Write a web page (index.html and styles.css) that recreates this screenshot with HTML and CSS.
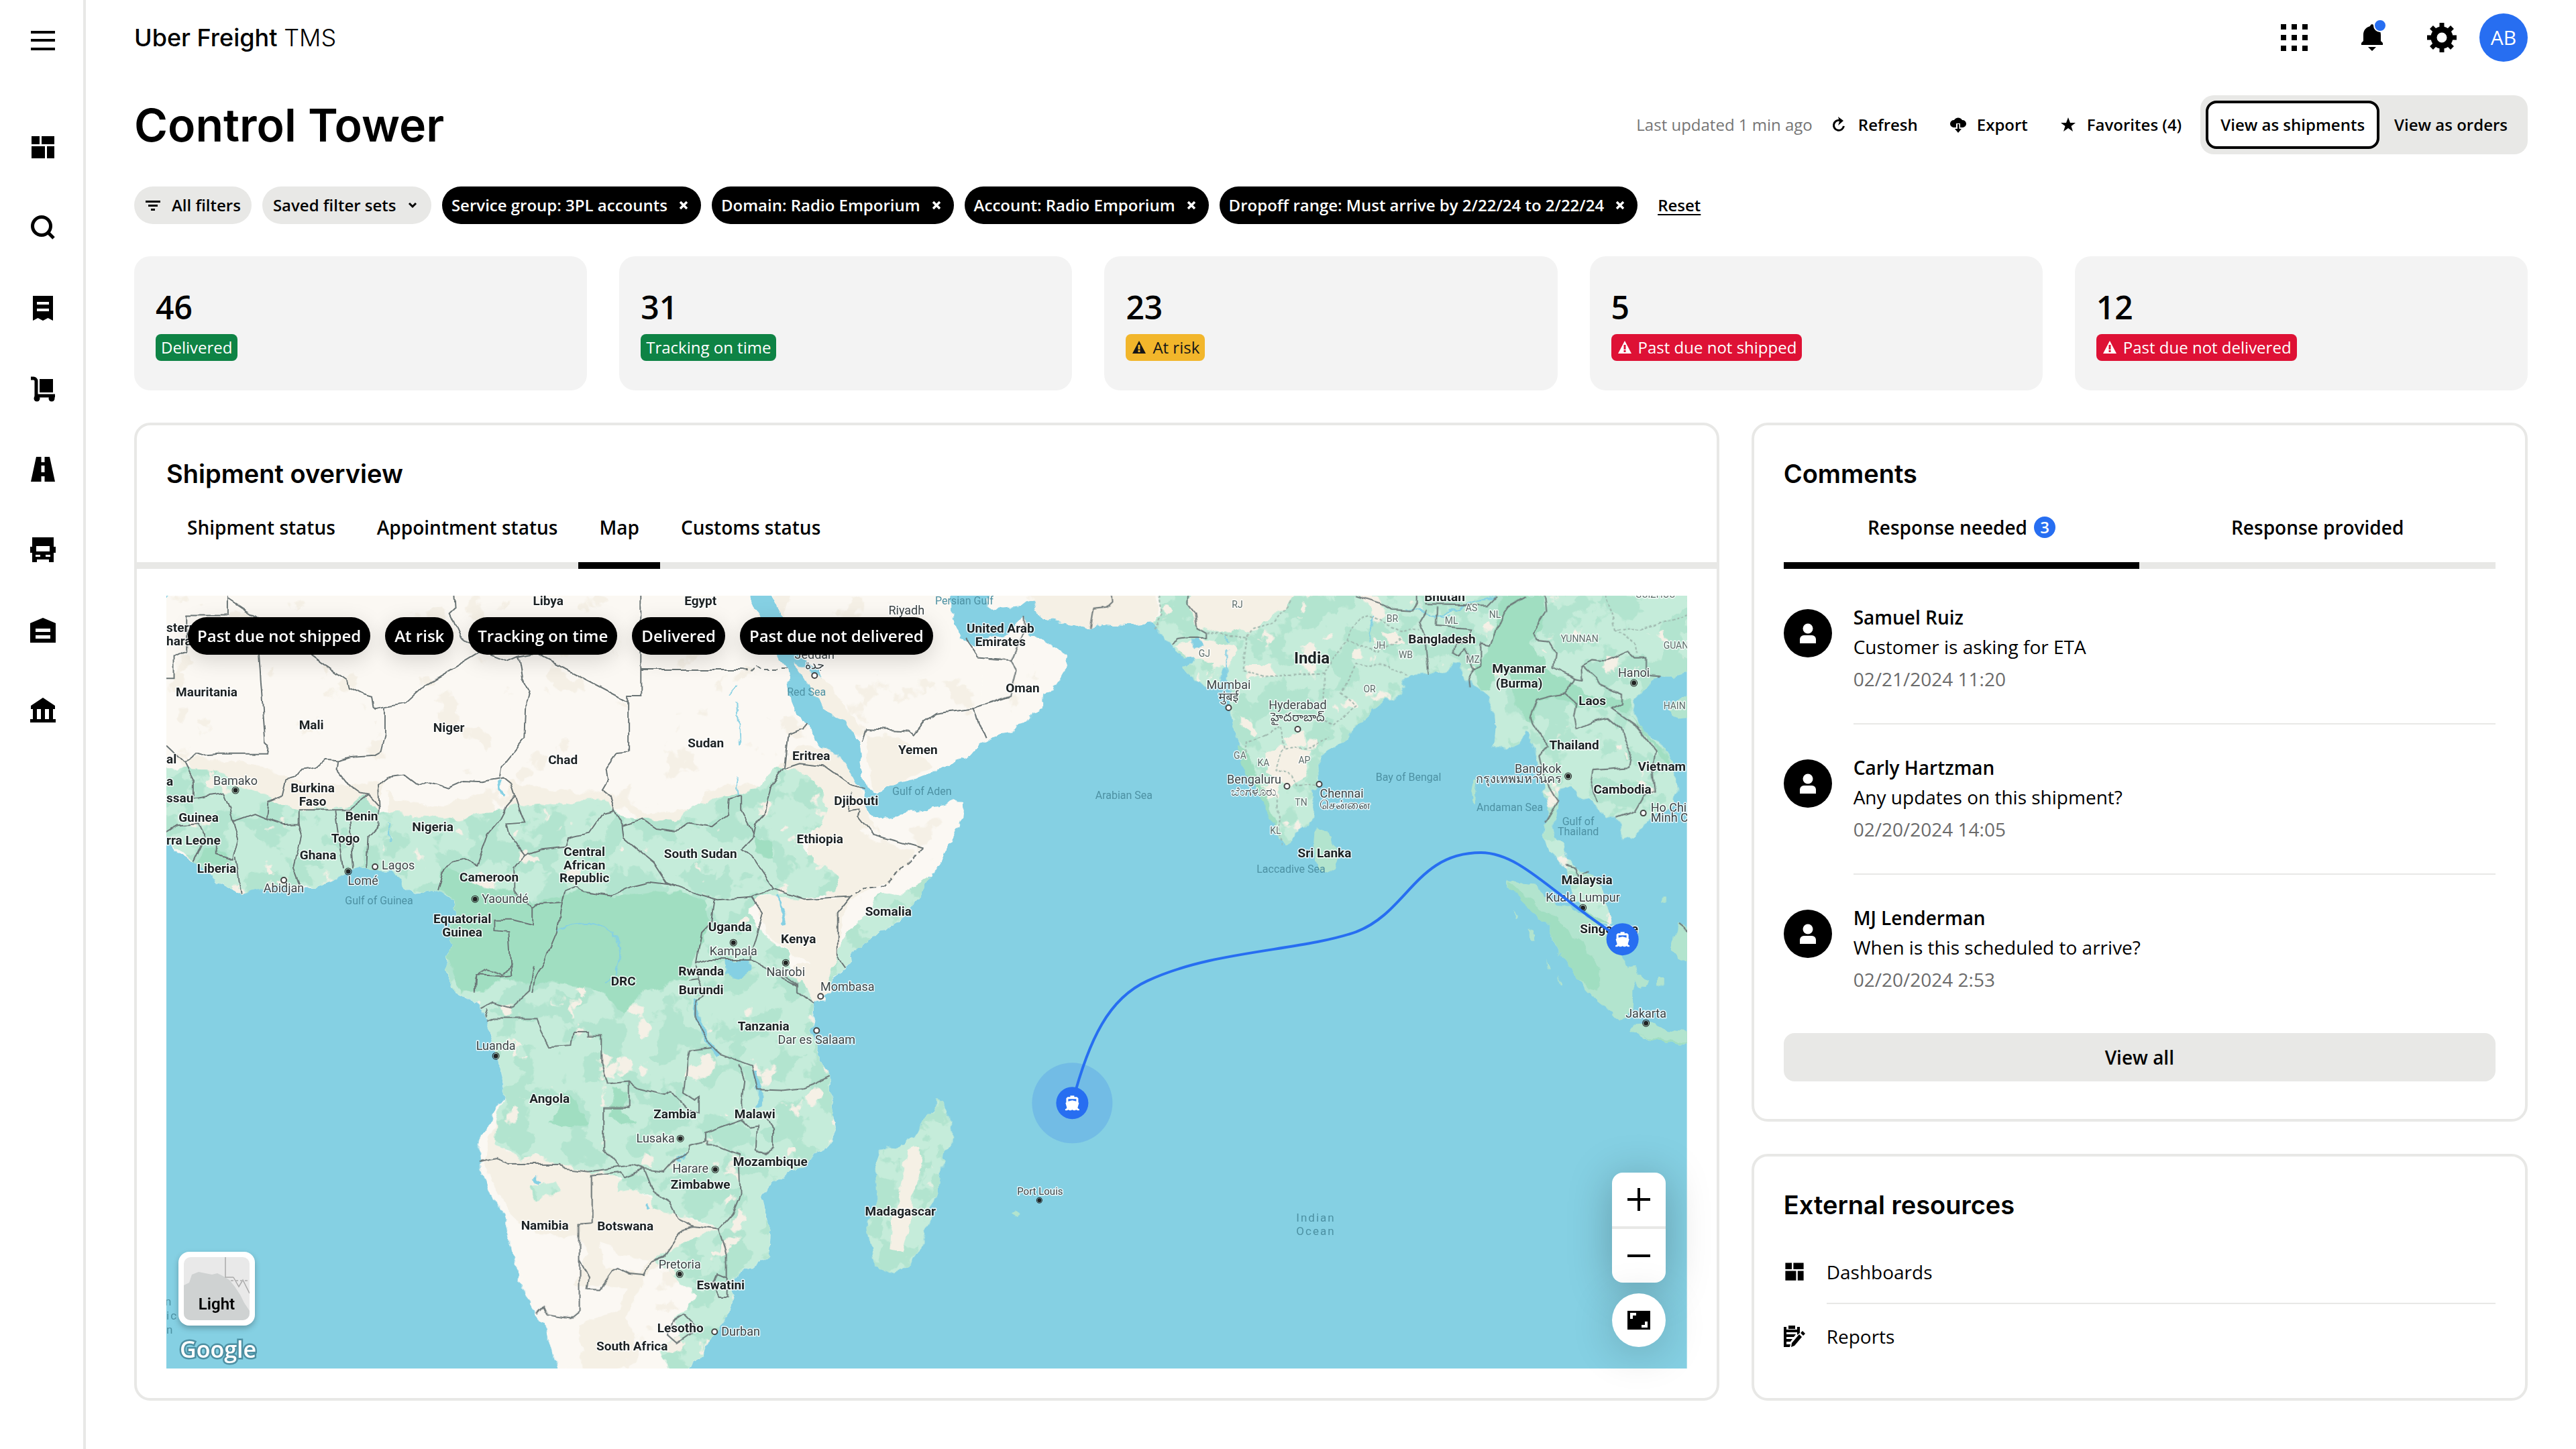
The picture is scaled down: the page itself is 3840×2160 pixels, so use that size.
FILE: index.html
```
<!DOCTYPE html>
<html lang="en">
<head>
    <meta charset="UTF-8">
    <meta name="viewport" content="width=device-width, initial-scale=1.0">
    <title>Control Tower - Uber Freight TMS</title>
    <link rel="stylesheet" href="styles.css">
</head>
<body>
    <!-- Shared icons -->
    <svg class="sprite" aria-hidden="true">
        <symbol id="i-dashboard" viewBox="0 0 40 40"><path d="M3 3h12v12H3zM18 3h19v12H18zM3 18h20v18H3zM26 18h11v18H26z"/></symbol>
        <symbol id="i-close" viewBox="0 0 24 24"><path d="M7 7l10 10M17 7L7 17" stroke="currentColor" stroke-width="3.5" fill="none"/></symbol>
        <symbol id="i-warning" viewBox="0 0 24 24"><path fill-rule="evenodd" d="M12 2L22 21H2zM10.500 8v7h3V8zM10.500 16v3h3v-3z"/></symbol>
        <symbol id="i-person" viewBox="0 0 72 72"><circle cx="36" cy="29" r="7.500"/><path d="M24 51v-6a6 6 0 0 1 6-6h12a6 6 0 0 1 6 6v6z"/></symbol>
        <symbol id="i-ship" viewBox="0 0 24 24"><path fill-rule="evenodd" d="M9 1h6v2h4l2 2v6l1 1-2 7 1 1.500c1 .5 1.500.5 1.500.5v2h-3l-1.500-1-2 1h-2l-2-1-2 1H8l-2-1-1.500 1h-3v-2s.5 0 1.500-.5L4 19 2 12l1-1V5l2-2h4zM6 6v3.500L12 8l6 1.500V6z"/></symbol>
    </svg>

    <div class="app">
        <nav class="sidebar" aria-label="Main">
            <button class="side-btn side-menu" aria-label="Menu"><svg viewBox="0 0 40 40"><path d="M2 6h36v4H2zM2 18h36v4H2zM2 31h36v4H2z"/></svg></button>
            <a class="side-btn" href="#" aria-label="Dashboard"><svg><use href="#i-dashboard"/></svg></a>
            <a class="side-btn" href="#" aria-label="Search"><svg viewBox="0 0 40 40"><g fill="none" stroke="#000" stroke-width="5"><circle cx="18" cy="17" r="13.500"/><path d="M27 26l9 9"/></g></svg></a>
            <a class="side-btn" href="#" aria-label="Invoices"><svg viewBox="0 0 40 40"><path fill-rule="evenodd" d="M5 1h30v37l-7.500-4-7.500 4-7.500-4L5 38zM11 10v4h18v-4zM11 20v4h18v-4z"/></svg></a>
            <a class="side-btn" href="#" aria-label="Loads"><svg viewBox="0 0 40 40"><path d="M15 5h20v20H15z"/><path d="M2 4h4a4 4 0 0 1 4 4v22h28" fill="none" stroke="#000" stroke-width="5"/><circle cx="11" cy="34" r="4.500"/><circle cx="33" cy="34" r="4.500"/></svg></a>
            <a class="side-btn" href="#" aria-label="Lanes"><svg viewBox="0 0 40 40"><path fill-rule="evenodd" d="M10 1h20l8 37H2zM17.500 1v8h5V1zM17.500 14v10h5V14zM17.500 30v8h5v-8z"/></svg></a>
            <a class="side-btn" href="#" aria-label="Carriers"><svg viewBox="0 0 40 40"><path fill-rule="evenodd" d="M4 1h32v14h3v9h-3v14h-7v-4H11v4H4V24H1v-9h3zM10 14v8h20v-8zM9 27v3h7v-3zM24 27v3h7v-3z"/></svg></a>
            <a class="side-btn" href="#" aria-label="Facilities"><svg viewBox="0 0 40 40"><path fill-rule="evenodd" d="M20 1l19 8v29H1V9zM9 17v5h22v-5zM9 27v5h22v-5z"/></svg></a>
            <a class="side-btn" href="#" aria-label="Accounting"><svg viewBox="0 0 40 40"><path d="M20 0l18 12v5H2v-5zM5 17h6v15H5zM17 17h6v15h-6zM29 17h6v15h-6zM1 32h38v5H1z"/></svg></a>
        </nav>

        <main class="main">
            <header class="topbar">
                <div class="logo">Uber Freight <span class="logo-tms">TMS</span></div>
                <div class="top-icons">
                    <button class="icon-btn" aria-label="Apps"><svg viewBox="0 0 44 44"><path d="M2 2h8v8H2zM18 2h8v8h-8zM34 2h8v8h-8zM2 18h8v8H2zM18 18h8v8h-8zM34 18h8v8h-8zM2 34h8v8H2zM18 34h8v8h-8zM34 34h8v8h-8z"/></svg></button>
                    <button class="icon-btn bell" aria-label="Notifications"><svg viewBox="0 0 44 44"><path d="M22 2a4 4 0 0 0-3 3C12 7 9 12 9 18v9l-3 3v3h32v-3l-3-3v-9c0-6-3-11-10-13a4 4 0 0 0-3-3zM16 36h12l-6 6z"/></svg><span class="bell-dot"></span></button>
                    <button class="icon-btn" aria-label="Settings"><svg viewBox="0 0 44 44"><g fill="none" stroke="#000"><circle cx="22" cy="22" r="12" stroke-width="9"/><path stroke-width="7" d="M22 0v9M22 35v9M0 22h9M35 22h9M6.500 6.500l6 6M31.500 31.500l6 6M37.500 6.500l-6 6M12.500 31.500l-6 6"/></g></svg></button>
                    <button class="user">AB</button>
                </div>
            </header>

            <div class="title-row">
                <h1>Control Tower</h1>
                <div class="actions">
                    <span class="updated">Last updated 1 min ago</span>
                    <button class="action"><svg viewBox="0 0 24 24"><path d="M18.500 13a7.500 7.500 0 1 1-7-7.500" transform="rotate(8 12 13)" fill="none" stroke="#000" stroke-width="3"/><path d="M10 0l8 6-8 7 2-6z"/></svg>Refresh</button>
                    <button class="action"><svg viewBox="0 0 24 24"><path d="M6 5a7 7 0 0 1 12 0 5.500 5.500 0 0 1 1 11h-4v-6H9v6H5A5.500 5.500 0 0 1 6 5z"/><path d="M11 11h2.500v7H17l-5 6-5-6h4z"/></svg>Export</button>
                    <button class="action"><svg viewBox="0 0 24 24"><path d="M12 1l3 8h8l-6.500 5 2.500 8-7-5-7 5 2.500-8L1 9h8z"/></svg>Favorites (4)</button>
                    <div class="toggle">
                        <button class="toggle-btn active">View as shipments</button>
                        <button class="toggle-btn">View as orders</button>
                    </div>
                </div>
            </div>

            <div class="filters">
                <button class="chip"><svg viewBox="0 0 24 24"><path d="M1 5h22v3H1zM5 11h14v3H5zM9 17h6v3H9z"/></svg>All filters</button>
                <div class="chip-select">
                    <select aria-label="Saved filter sets"><option>Saved filter sets</option></select>
                    <svg viewBox="0 0 24 24"><path d="M7 9l5 5 5-5" fill="none" stroke="#000" stroke-width="3"/></svg>
                </div>
                <button class="chip dark">Service group: 3PL accounts<svg><use href="#i-close"/></svg></button>
                <button class="chip dark">Domain: Radio Emporium<svg><use href="#i-close"/></svg></button>
                <button class="chip dark">Account: Radio Emporium<svg><use href="#i-close"/></svg></button>
                <button class="chip dark">Dropoff range: Must arrive by 2/22/24 to 2/22/24<svg><use href="#i-close"/></svg></button>
                <a class="reset" href="#">Reset</a>
            </div>

            <section class="stats">
                <div class="stat"><div class="stat-number">46</div><span class="badge green">Delivered</span></div>
                <div class="stat"><div class="stat-number">31</div><span class="badge green">Tracking on time</span></div>
                <div class="stat"><div class="stat-number">23</div><span class="badge yellow"><svg><use href="#i-warning"/></svg>At risk</span></div>
                <div class="stat"><div class="stat-number">5</div><span class="badge red"><svg><use href="#i-warning"/></svg>Past due not shipped</span></div>
                <div class="stat"><div class="stat-number">12</div><span class="badge red"><svg><use href="#i-warning"/></svg>Past due not delivered</span></div>
            </section>

            <div class="panels">
                <section class="card overview">
                    <h2>Shipment overview</h2>
                    <div class="tabs">
                        <button class="tab">Shipment status</button>
                        <button class="tab">Appointment status</button>
                        <button class="tab active">Map</button>
                        <button class="tab">Customs status</button>
                    </div>

                    <div class="map">
                        <svg class="map-svg" viewBox="0 0 2266 1152" role="img" aria-label="Shipment map">
                            <defs>
                                <!-- breaks up straight coast lines -->
                                <filter id="rough" filterUnits="userSpaceOnUse" x="-20" y="-20" width="2306" height="1192" color-interpolation-filters="sRGB">
                                    <feTurbulence type="fractalNoise" baseFrequency="0.05" numOctaves="3" seed="4"/>
                                    <feDisplacementMap in="SourceGraphic" scale="14" xChannelSelector="R" yChannelSelector="G"/>
                                </filter>
                                <!-- softer version for the thin border lines -->
                                <filter id="wobble" filterUnits="userSpaceOnUse" x="-20" y="-20" width="2306" height="1192" color-interpolation-filters="sRGB">
                                    <feTurbulence type="fractalNoise" baseFrequency="0.05" numOctaves="1" seed="4"/>
                                    <feDisplacementMap in="SourceGraphic" scale="10" xChannelSelector="R" yChannelSelector="G"/>
                                </filter>
                                <!-- vegetation patches inside the green areas -->
                                <filter id="patches" filterUnits="userSpaceOnUse" x="-20" y="-20" width="2306" height="1192" color-interpolation-filters="sRGB">
                                    <feTurbulence type="fractalNoise" baseFrequency="0.022" numOctaves="4" seed="11" result="n"/>
                                    <feColorMatrix in="n" values="0 0 0 0 .7  0 0 0 0 .895  0 0 0 0 .81  24 0 0 0 -12.5" result="mid"/>
                                    <feColorMatrix in="n" values="0 0 0 0 .96  0 0 0 0 .94  0 0 0 0 .9  0 24 0 0 -16.6" result="sand"/>
                                    <feMerge result="m"><feMergeNode in="mid"/><feMergeNode in="sand"/></feMerge>
                                    <feComposite in="m" in2="SourceAlpha" operator="in" result="c"/>
                                    <feMerge><feMergeNode in="SourceGraphic"/><feMergeNode in="c"/></feMerge>
                                </filter>
                                <filter id="dunes" filterUnits="userSpaceOnUse" x="-20" y="-20" width="2306" height="1192" color-interpolation-filters="sRGB">
                                    <feTurbulence type="fractalNoise" baseFrequency="0.018" numOctaves="4" seed="7"/>
                                    <feColorMatrix values="0 0 0 0 .96  0 0 0 0 .94  0 0 0 0 .9  24 0 0 0 -15.8"/>
                                    <feComposite in2="SourceAlpha" operator="in" result="c"/>
                                    <feMerge><feMergeNode in="SourceGraphic"/><feMergeNode in="c"/></feMerge>
                                </filter>
                            </defs>
                            <rect class="water" x="0" y="0" width="2266" height="1152"/>

                            <g filter="url(#rough)">
                                <!-- land -->
                                <g class="land" filter="url(#dunes)">
                                    <g transform="translate(-8 -8) scale(.7972 .38266)">
                                        <path d="M18 0L14 40-20 80V900L0 930 20 985 35 1030 60 1058 85 1100 105 1135 150 1180 175 1160 230 1150 262 1160 290 1155 320 1125 345 1100 372 1085 432 1088 440 1105 455 1160 475 1182 518 1168 530 1185 548 1215 552 1260 540 1290 535 1330 545 1380 533 1430 535 1500 550 1568 580 1600H1240L1240 1560 1262 1500 1277 1465 1300 1405 1330 1345 1385 1280 1420 1190 1435 1130 1455 1060 1475 985 1490 920 1498 850 1500 822 1485 820 1475 838 1440 848 1410 860 1370 882 1345 892 1325 865 1315 830 1315 790 1290 730 1250 660 1228 590 1210 515 1187 480 1177 430 1172 330 1150 230 1125 130 1098 22V0z"/>
                                        <path d="M1136 0L1160 95 1175 160 1195 250 1230 330 1255 420 1265 480 1295 545 1305 600 1310 690 1320 770 1335 785 1370 755 1410 735 1440 710 1480 665 1510 650 1530 600 1568 568V190L1530 215 1510 205 1495 180 1484 110 1475 60V0z"/>
                                    </g>
                                    <g transform="translate(1232 -8) scale(.67604 .38266)">
                                        <path d="M-20 590L0 572 40 560 50 520 75 510 85 470 110 460 112 400 130 390 145 350 165 300 160 260 140 225 110 190 85 185 75 150 68 95 45 150 20 180-30 190zM-10 0V65L25 72 60 65 75 45 90 40 95 75 110 110 150 125 215 145 240 130 300 135 355 125 600 200 700 0z"/>
                                    </g>
                                    <g transform="translate(-8 552) scale(.7972 .39541)">
                                        <path d="M535-20L560 70 580 110 597 155 605 200 620 270 628 350 640 430 640 500 625 540 610 600 597 650 593 700 595 760 610 830 635 910 655 1000 658 1080 670 1190 690 1270 710 1330 725 1400 740 1460 745 1560H970L988 1520 1010 1470 1030 1400 1060 1320 1070 1240 1070 1180 1090 1150 1135 1100 1140 1000 1128 930 1122 870 1140 820 1185 770 1220 720 1250 670 1260 610 1252 540 1250 410 1235 370 1228 300 1215 240 1220 190 1222 140 1240 90 1262 40 1275-20z"/>
                                    </g>
                                </g>

                                <!-- dry areas -->
                                <g class="sand">
                                    <path transform="translate(-8 -8) scale(.7972 .38266)" d="M45 650L130 660 200 690 240 740 330 760 400 750 420 740 400 860 330 900 200 850 60 740zM420 780l20 40 90 20 80-60 20 120-200 20zM650 740l60 30 80 20 40 0 20 80-60 10-130-10zM850 800l60 70 90-20 20-70 50-30 60 20 30-100 30-60 50 0 40 60 30 120 20 120-40 40-400-60zM1210 950l60-60 60 80 80 50-40 100-60 60-30 30-70-60zM1110 1190l180 10-20 80 0 180-20 60-120-180zM1180 280l60 70 40 110 40 100-20 0-60-100zM1320 560l60 10 60 120-60 60-50 30-10-120z"/>
                                    <path transform="translate(-8 552) scale(.7972 .39541)" d="M625 580L650 700 800 740 960 930 1040 990 960 1090 900 1180 870 1330 890 1400 860 1520 790 1540 780 1420 740 1280 700 1100 660 960 620 830 600 740zM1180 0l70 0 0 90-30 50-60-60zM1080 70l60-20 30 80-30 30z"/>
                                </g>
                                <g class="land">
                                    <path transform="translate(-8 552) scale(.7972 .39541)" d="M593 760L620 790 650 930 700 1010 780 1020 800 1080 770 1200 870 1210 860 1300 780 1350 790 1450 745 1540 725 1400 690 1270 658 1080 640 920zM820 1030l40 60 50 10-10 60-70-20z"/>
                                </g>

                                <!-- vegetation -->
                                <g class="green" filter="url(#patches)">
                                    <g transform="translate(-8 -8) scale(.7972 .38266)">
                                        <path d="M-20 690L100 700 130 730 130 760 200 800 240 850 270 860 300 845 340 850 380 800 410 870 450 860 470 890 500 880 560 900 590 870 630 860 660 830 690 840 740 830 780 820 830 812 860 880 900 890 960 900 1000 830 1060 800 1110 780 1150 690 1190 700 1230 770 1250 850 1230 920 1190 960 1220 1050 1270 1110 1260 1170 1190 1200 1120 1185 1100 1250 1120 1340 1180 1420 1170 1480 1190 1600H580L550 1568 535 1500 533 1430 545 1380 535 1330 540 1290 552 1260 548 1215 518 1168 475 1182 455 1160 432 1088 372 1085 320 1125 290 1155 230 1150 150 1180 105 1135 60 1058 20 985 0 930-20 900zM1440 1120L1385 1180 1340 1190 1320 1260 1280 1330 1240 1560 1262 1500 1300 1405 1330 1345 1385 1280 1420 1190z"/>
                                    </g>
                                    <g transform="translate(-8 552) scale(.7972 .39541)">
                                        <path d="M535-20L560 70 580 110 597 155 605 200 620 270 628 350 640 430 640 500 625 580 625 680 660 700 680 740 700 710 730 735 760 750 800 775 860 800 850 850 880 840 920 870 920 920 950 930 1010 960 1040 990 970 1050 920 1100 960 1170 1000 1250 960 1330 970 1390 930 1450 950 1520 988 1520 1010 1470 1030 1400 1060 1320 1070 1240 1070 1180 1090 1150 1135 1100 1140 1000 1128 930 1122 870 1140 820 1185 770 1220 720 1250 670 1260 610 1252 540 1250 410 1235 370 1228 300 1215 240 1222 140 1200 60 1160 20 1120-20zM690 830l50-20 10 40-50 30z"/>
                                        <path d="M1455 490L1468 540 1480 620 1478 680 1465 700 1455 830 1435 960 1415 1080 1400 1130 1370 1155 1335 1130 1325 1040 1318 960 1340 880 1335 760 1345 690 1390 670 1415 630 1425 575 1445 550z"/>
                                    </g>
                                    <g transform="translate(1232 -8) scale(.67604 .38266)">
                                        <path d="M365-20L372 90 355 125 365 160 375 190 395 210 405 250 420 270 445 265 440 280 418 295 435 335 470 375 505 360 500 310 512 290 515 340 525 400 522 450 530 520 540 580 555 650 570 700 590 780 605 820 615 890 630 960 648 998 660 985 665 950 690 920 708 890 710 830 705 790 720 750 715 690 725 640 745 620 775 590 780 560 810 510 845 450 860 425 885 415 905 380 900 350 920 330 960 325 1000 310 1015 280 1030 290 1045 350 1075 390 1090 430 1105 480 1110 530 1103 600 1130 620 1160 595 1172 550 1185 580 1200 650 1205 720 1215 780 1225 840 1215 930 1210 970 1225 1010 1245 1045 1260 1080 1265 1130 1272 1170 1295 1230 1320 1280 1355 1310 1365 1290 1350 1240 1345 1160 1320 1110 1290 1080 1265 1050 1260 990 1240 960 1235 930 1238 880 1245 820 1250 780 1275 770 1290 800 1320 820 1340 860 1350 880 1375 885 1385 900 1388 970 1420 950 1440 900 1470 870 1500 840 1508 780 1505 700 1490 640 1465 590 1430 540 1410 480 1415 430 1440 380 1465 335 1500 335 1520 320 1560 300V-20z"/>
                                    </g>
                                </g>
                                <g transform="translate(1232 -8) scale(.67604 .38266)" class="sand">
                                    <path d="M80-20L95 75 110 110 150 125 215 145 240 130 300 135 355 125 366 90 358-20zM440-20L432 60 450 140 500 170 540 150 570 170 600 120 650 60 680-20zM400 215l60-25 50 15 30 30-20 60-30-5-25-25-40 5zM555 290h60l10 45h-70zM790 230l20-5v40l-20 5zM860 170l30-10 15 40-35 5zM545 490l40 60-10 15-30-40zM600 640l30-40 70 20-10 90-35 60-50-60zM640 580l45-30 5 50-40 20z"/>
                                </g>
                                <path class="water" d="M1526 67l12-4 6 10-10 8z"/>

                                <!-- rain forest -->
                                <g class="forest">
                                    <path transform="translate(-8 -8) scale(.7972 .38266)" d="M525 1080L560 1100 600 1160 660 1170 700 1220 780 1165 850 1195 960 1170 1020 1215 1025 1300 1000 1440 980 1520 900 1560 865 1650 820 1560 720 1520 700 1540 640 1510 600 1560 560 1568 533 1430 545 1380 535 1330 552 1260 548 1215 520 1160zM80 1000l40 20 10 60-60-20zM1110 960l30 20 10 60-40-20z"/>
                                    <path transform="translate(-8 552) scale(.7972 .39541)" d="M750 470l25 40 20 80-30 20-40-20 20-40zM845 460l28 20-10 60 25 50-30 10-20-40z"/>
                                    <path transform="translate(1232 -8) scale(.67604 .38266)" d="M1120 20L1215 20 1215 150 1180 200 1230 320 1280 350 1300 400 1410 430 1400 480 1450 570 1490 650 1490 700 1455 600 1400 480 1360 460 1280 450 1240 410 1200 430 1190 520 1150 440 1140 330 1110 300 1095 400 1075 390 1060 310 1100 200zM540 600l20 40 40 140 30 170-20-60-30-120-30-90z"/>
                                </g>
                                <g class="islands" transform="translate(1232 -8) scale(.67604 .38266)">
                                    <path d="M712 920L735 940 750 990 765 1040 755 1085 735 1103 715 1080 708 1020zM1130 1125L1165 1140 1195 1145 1215 1190 1250 1225 1290 1260 1330 1290 1355 1330 1370 1370 1380 1420 1400 1470 1414 1540 1413 1628 1396 1650 1380 1672 1359 1634 1323 1584 1292 1518 1255 1430 1240 1370 1225 1300 1195 1260 1175 1215 1140 1170zM1400 1470l20-5 5 35 15 30-10 20-20-25zM1462 1515h16v28h-16zM1510 1300L1560 1340V1480L1515 1440 1497 1400 1500 1350zM1403 1716L1416 1689 1453 1683 1484 1711 1560 1725V1775L1484 1763 1453 1747 1432 1744zM1500 430l20-15 40 5v70l-50 10-20-30zM1062 740l6 2-6 90-6-10zM1140 1250l18 22-6 4zM1180 1320l16 16v24l-10-6zM1220 1440l8 40-6-4zM1245 1500l12 40-6-6zM1476 1190h8v24h-8z"/>
                                </g>
                                <g class="forest" transform="translate(1232 -8) scale(.67604 .38266)">
                                    <path d="M1135 1130L1165 1180 1200 1230 1250 1290 1300 1380 1340 1480 1330 1560 1292 1518 1255 1430 1225 1300 1195 1260 1140 1170zM1270 1160l30 80 60 60-40-10-25-60zM1403 1716l30 20 50 15 70 20-70-8-31-16z"/>
                                </g>
                                <ellipse class="islands" cx="1267" cy="920" rx="6" ry="4"/>
                                <path class="water" d="M834 543l32-2 4 20-20 10-14-6z"/>
                                <path class="sand" d="M1104 828l20-8 2 26-12 34-6 54-12 44-18-4 4-40 12-46z"/>

                                <!-- lakes and rivers -->
                                <g class="rivers">
                                    <path stroke-width="7" d="M788 600l5 36 19 35 10 15M876 706l8 32-1 26"/>
                                    <path stroke-width="4" d="M912 445l3 20 8 25M495 274l3 14 8 10M760 842l12-10M548 868l8 8M715 905l6 10"/>
                                    <path stroke-width="2" d="M582 500c20-14 60-20 84 4 20 24 10 60-10 70M838 150l12-14M850 160l4 60M848 270l4 30M330 340l4 30M1578 60l6 10M1580 80v50M1850 20l60 10M1890 30l90-30M1800 30l-10 40"/>
                                </g>
                            </g>

                            <!-- country borders -->
                            <g class="borders" filter="url(#wobble)">
                                <g transform="translate(-8 -8) scale(.7972 .38266)">
                                    <path d="M124 0V98H48V235L22 262V343H-10M124 30L178 105M178 105L195 590 200 600 197 637H107L75 642 65 635 55 655 43 672 28 640 10 605M178 105L280 250 349 352 352 378 378 405 395 415 398 455 402 463 456 440 494 368 600 235 650 275 668 258 700 245 873 435M668 258L675 340 688 390 683 430 680 575 635 690 632 725M420 455V560L412 628 400 642 355 648 330 662 307 658 290 690 262 700 250 730 232 740 225 800 200 820 197 888M330 662L328 700 345 745 375 790 388 795 407 840 405 760 425 728 455 720 480 760 500 745 535 770 565 742 600 745 640 730 655 755"/>
                                    <path d="M388 795L352 855H258V910L230 912 195 888 175 870 135 900 130 850 118 790 90 800 60 812V740L43 672M407 840V910L387 955 384 1085M325 855L340 1085M352 855L360 1088M135 900L145 970 135 1050 105 1030V990M0 955L30 915 70 910 82 960 60 1058M140 1040L150 1180M258 910L263 950 248 1080 260 1145M655 755L662 800 645 840 630 900 610 950 590 1070 565 1045 545 1055 527 1100 518 1168M655 755L670 850 680 905 645 910 650 950 680 1030 660 1080V1170L695 1240V1305L655 1285H625V1325L650 1330 655 1500 635 1505 590 1500 588 1560"/>
                                    <path d="M680 1030L710 1010 755 1000 760 965 800 945 825 870 848 860 862 910 865 965 885 1000 920 1060 945 1140 1005 1185 1040 1205 1105 1195 1145 1160M695 1240L705 1220 750 1215 755 1170 778 1150 790 1175 840 1190 880 1150 910 1135 950 1145M897 0V410H873V628L852 632 832 690 835 740 825 775 840 800 848 860M897 308H1085M548 0L550 70 540 90 560 180 595 235M862 915L900 890 925 925 965 935 985 905 1030 920 1060 870 1062 815 1085 800V860L1102 930 1108 960 1085 1010 1110 1050 1145 1160 1200 1200 1290 1190 1265 1255V1430L1277 1465"/>
                                    <path d="M1208 512L1200 540 1172 560 1165 690 1140 760 1128 870 1110 910 1105 960M1165 695L1195 675 1240 685 1290 760 1315 775M1290 790L1285 860 1305 855M1305 860L1303 880 1330 950 1425 1005M1105 1195L1125 1260 1100 1435 1190 1540M1035 1205L1030 1290 1012 1330 1002 1455 1025 1437H1103M750 1215L740 1330 720 1430 700 1510 695 1568M1310 590L1318 538 1400 548 1408 563 1428 510 1450 480 1518 460 1585 415M1518 460L1542 578M1505 185L1530 260 1568 268"/>
                                    <path class="dashed" d="M1085 308L1100 320 1112 295 1122 308H1172M1425 1005L1350 1150 1310 1160 1290 1190"/>
                                </g>
                                <g transform="translate(-8 552) scale(.7972 .39541)">
                                    <path d="M588 100L588 50 590 40 610 15 640 35 655-10M597 160L620 135 655 155 690 90 697 0M605 195L610 160M607 208L620 198H703L710 245 725 303 768 298 772 252H795V264H823V360L835 445 875 438V532H828V688L858 755M875 438L890 460 940 485 950 470 985 540 1007 555V495L1000 510 978 480 985 350 988 320 1028 310M1000 130V200L1028 300 1045 330 1105 375 1115 465 1160 468 1200 460 1225 440 1250 415M1080 370L1090 430 1085 510 1087 580 1017 630V660L988 675 985 705 960 730 940 775 903 765 880 750 800 775 755 765 748 745H645L630 725 593 738M1087 580L1100 605 1115 600 1112 690 1130 715 1145 680V610L1130 570"/>
                                    <path d="M903 765L865 795 860 778 806 790V968L782 972V1300L765 1328 722 1315 715 1283 703 1310M903 765L920 850 950 890 965 950 995 980 1043 992 1068 935 1083 860 1080 710 1040 678H1020V660M995 980L975 990 940 1090 915 1110 905 1165 875 1160 855 1140 845 1150 820 1220 797 1218 800 1170 782 1110M1043 992L1058 1085V1243H1043L1032 1200 1040 1160 1058 1175M978 1310L997 1350 990 1385 965 1420 948 1390 955 1340zM1002 0V50L985 55M1002 50L1015 110 1000 130M1150 10L1190 70V95L1222 143"/>
                                </g>
                                <g transform="translate(1232 -8) scale(.67604 .38266)">
                                    <path d="M260 0L262 45 250 65 222 70 215 145M432 0L430 55 445 90 450 145 470 165V185L430 185 410 190 395 210M-10 268L40 275 60 190 70 150 68 95M40 275L52 310 38 410-10 440M800 22L850 50 880 75 925 80 935 50V0M950 55L1090 58 1110 22M955 75L940 120 950 170 955 240 960 328M980 65L978 138 1055 150 1045 200 1020 205 1015 240 1030 255 1040 225 1060 310 1048 345 1050 375M1175 25L1135 65 1125 90 1095 212 1075 205V290L1060 310"/>
                                    <path d="M1215 0L1220 80 1190 165 1200 195 1225 200 1240 240 1235 300 1275 335 1285 345 1260 400 1230 410 1200 425 1185 490 1190 520 1215 590 1225 610 1205 650 1215 730 1245 820 1215 908M1285 345L1300 350 1298 290 1320 270 1350 275 1400 240 1415 265 1440 265V330L1470 335M1300 290L1330 340 1340 370 1385 405V440L1365 460 1420 530 1460 620 1455 700 1460 785 1435 800 1415 860 1375 885M1260 400L1285 440 1280 490 1285 538 1320 510 1355 495 1385 540 1405 640 1400 690 1325 700 1320 760 1333 825M1260 1070L1285 1080 1290 1110 1310 1090M1512 1300L1540 1340"/>
                                    <path class="states" d="M365 0L372 90 355 155M470 165L560 185 575 150 620 130 640 80 660 40M560 185L550 310 600 335 730 325 740 290 780 200 800 120 830 100 900 160 940 150M730 325V400L720 500 750 530 800 450 770 400 800 290 870 290 910 330M600 565L560 590 555 650M600 565L635 530 640 620 700 610 740 570M635 620L625 700 660 720 670 760 720 755M625 800L635 990M625 800L590 780M1350 0L1370 150 1430 150 1540 90M1370 150L1415 200 1420 250M780 200L850 240 900 180"/>
                                </g>
                            </g>

                            <!-- place names -->
                            <g class="country">
                                <text x="569" y="14">Libya</text><text x="796" y="14">Egypt</text>
                                <text class="start" x="0" y="54">stern</text><text class="start" x="0" y="74">hara</text>
                                <text x="1243" y="55">United Arab</text><text x="1243" y="75">Emirates</text>
                                <text x="60" y="150">Mauritania</text><text x="216" y="199">Mali</text><text x="421" y="203">Niger</text>
                                <text x="591" y="251">Chad</text><text x="804" y="226">Sudan</text><text x="961" y="245">Eritrea</text>
                                <text x="1120" y="236">Yemen</text><text x="1028" y="312">Djibouti</text><text x="1276" y="144">Oman</text>
                                <text class="start" x="0" y="250">al</text><text class="start" x="0" y="283">a</text><text class="start" x="0" y="308">ssau</text>
                                <text x="48" y="337">Guinea</text><text class="start" x="0" y="371">rra Leone</text><text x="75" y="413">Liberia</text>
                                <text x="218" y="293">Burkina</text><text x="218" y="313">Faso</text><text x="291" y="335">Benin</text>
                                <text x="267" y="368">Togo</text><text x="226" y="393">Ghana</text><text x="397" y="351">Nigeria</text>
                                <text x="481" y="426">Cameroon</text><text x="441" y="488">Equatorial</text><text x="441" y="508">Guinea</text>
                                <text x="623" y="388">Central</text><text x="623" y="408">African</text><text x="623" y="427">Republic</text>
                                <text x="796" y="391">South Sudan</text><text x="974" y="369">Ethiopia</text><text x="1076" y="477">Somalia</text>
                                <text x="840" y="500">Uganda</text><text x="942" y="518">Kenya</text><text x="797" y="566">Rwanda</text>
                                <text x="681" y="581">DRC</text><text x="797" y="594">Burundi</text><text x="890" y="648">Tanzania</text>
                                <text x="571" y="756">Angola</text><text x="758" y="779">Zambia</text><text x="877" y="779">Malawi</text>
                                <text x="900" y="850">Mozambique</text><text x="796" y="884">Zimbabwe</text><text x="564" y="945">Namibia</text>
                                <text x="684" y="946">Botswana</text><text x="1094" y="924">Madagascar</text><text x="826" y="1034">Eswatini</text>
                                <text x="766" y="1098">Lesotho</text><text x="694" y="1125">South Africa</text>
                                <text class="big" x="1707" y="101">India</text><text x="1726" y="390">Sri Lanka</text>
                                <text x="1905" y="8">Bhutan</text><text x="1901" y="71">Bangladesh</text><text x="2016" y="115">Myanmar</text><text x="2016" y="137">(Burma)</text>
                                <text x="2125" y="163">Laos</text><text x="2098" y="229">Thailand</text><text class="start" x="2193" y="261">Vietnam</text>
                                <text x="2170" y="295">Cambodia</text><text x="2117" y="430">Malaysia</text><text x="2150" y="503">Singapore</text>
                            </g>
                            <g class="city">
                                <text x="1103" y="28">Riyadh</text><text x="966" y="94">Jeddah</text><text x="966" y="109">جدة</text>
                                <text x="103" y="282">Bamako</text><text class="start" x="321" y="408">Lagos</text><text x="293" y="431">Lomé</text>
                                <text x="175" y="442">Abidjan</text><text class="start" x="470" y="458">Yaoundé</text><text x="845" y="536">Kampala</text>
                                <text x="923" y="567">Nairobi</text><text x="1015" y="589">Mombasa</text><text x="969" y="668">Dar es Salaam</text>
                                <text x="491" y="677">Luanda</text><text x="729" y="815">Lusaka</text><text x="781" y="860">Harare</text>
                                <text x="765" y="1003">Pretoria</text><text class="start" x="827" y="1103">Durban</text>
                                <text x="1583" y="139">Mumbai</text><text x="1583" y="157">मुंबई</text><text x="1686" y="169">Hyderabad</text><text x="1686" y="187">హైదరాబాద్</text>
                                <text x="1621" y="280">Bengaluru</text><text x="1621" y="298">ಬೆಂಗಳೂರು</text><text class="start" x="1719" y="301">Chennai</text><text class="start" x="1719" y="318">சென்னை</text>
                                <text class="end" x="2079" y="264">Bangkok</text><text class="end" x="2079" y="279">กรุงเทพมหานคร</text>
                                <text x="2187" y="121">Hanoi</text><text class="start" x="2212" y="322">Ho Chi</text><text class="start" x="2212" y="337">Minh C</text>
                                <text x="2111" y="456">Kuala Lumpur</text><text x="2205" y="629">Jakarta</text><text class="small" x="1302" y="893">Port Louis</text>
                            </g>
                            <g class="state">
                                <text x="1596" y="18">RJ</text><text x="1547" y="91">GJ</text><text x="1600" y="243">GA</text><text x="1635" y="254">KA</text><text x="1696" y="250">AP</text>
                                <text x="1691" y="313">TN</text><text x="1653" y="355">KL</text><text x="1945" y="23">AS</text><text x="1980" y="33">NL</text><text x="1915" y="42">ML</text>
                                <text x="1827" y="39">BR</text><text x="1808" y="79">JH</text><text x="1847" y="93">WB</text><text x="1947" y="100">MZ</text><text x="1793" y="144">OR</text>
                                <text x="2106" y="69">YUNNAN</text><text x="2219" y="3">GUIZHOU</text><text class="start" x="2231" y="79">GUAN</text><text class="start" x="2231" y="169">HAIN</text>
                            </g>
                            <g class="sea">
                                <text x="1189" y="13">Persian Gulf</text><text x="954" y="149">Red Sea</text><text x="1126" y="297">Gulf of Aden</text><text x="317" y="460">Gulf of Guinea</text>
                                <text x="1427" y="303">Arabian Sea</text><text x="1851" y="276">Bay of Bengal</text><text x="1676" y="413">Laccadive Sea</text><text x="2002" y="321">Andaman Sea</text>
                                <text x="2104" y="342">Gulf of</text><text x="2104" y="357">Thailand</text>
                                <g class="ocean"><text x="1713" y="933">Indian</text><text x="1713" y="953">Ocean</text><text class="start" x="-2" y="1058">n</text><text class="start" x="0" y="1079">ic</text><text class="start" x="0" y="1100">n</text></g>
                            </g>
                            <g class="capital">
                                <circle cx="103" cy="290" r="3.500"/><circle cx="271" cy="411" r="3.500"/><circle cx="460" cy="452" r="3.500"/><circle cx="845" cy="517" r="3.500"/>
                                <circle cx="923" cy="547" r="3.500"/><circle cx="491" cy="686" r="3.500"/><circle cx="766" cy="809" r="3.500"/><circle cx="818" cy="855" r="3.500"/>
                                <circle cx="765" cy="1011" r="3.500"/><circle cx="2187" cy="130" r="3.500"/><circle cx="2089" cy="269" r="3.500"/><circle cx="2111" cy="465" r="3.500"/>
                                <circle cx="2205" cy="637" r="3.500"/><circle cx="1301" cy="901" r="3"/>
                            </g>
                            <g class="town">
                                <circle cx="966" cy="119" r="4"/><circle cx="311" cy="404" r="4"/><circle cx="175" cy="424" r="4"/><circle cx="975" cy="597" r="4"/><circle cx="969" cy="648" r="4"/>
                                <circle cx="817" cy="1097" r="4"/><circle cx="1583" cy="167" r="4"/><circle cx="1686" cy="199" r="4"/><circle cx="1670" cy="284" r="4"/><circle cx="1718" cy="281" r="4"/><circle cx="2201" cy="324" r="4"/>
                            </g>
                            <g class="ring">
                                <circle cx="103" cy="290" r="5"/><circle cx="271" cy="411" r="5"/><circle cx="460" cy="452" r="5"/><circle cx="845" cy="517" r="5"/>
                                <circle cx="923" cy="547" r="5"/><circle cx="491" cy="686" r="5"/><circle cx="766" cy="809" r="5"/><circle cx="818" cy="855" r="5"/>
                                <circle cx="765" cy="1011" r="5"/><circle cx="2187" cy="130" r="5"/><circle cx="2089" cy="269" r="5"/><circle cx="2111" cy="465" r="5"/>
                                <circle cx="2205" cy="637" r="5"/><circle cx="1301" cy="901" r="4"/>
                            </g>

                            <!-- shipment route -->
                            <path class="route" d="M1350 756C1375 660 1405 600 1462 574C1560 528 1690 530 1773 501C1850 472 1862 383 1959 383C2020 383 2070 450 2170 512"/>
                            <circle class="halo" cx="1350" cy="756" r="60"/>
                            <circle class="pin" cx="1350" cy="756" r="24"/>
                            <use class="pin-icon" href="#i-ship" x="1338" y="744" width="24" height="24"/>
                            <circle class="pin" cx="2170" cy="512" r="24"/>
                            <use class="pin-icon" href="#i-ship" x="2158" y="500" width="24" height="24"/>
                            <text class="google" x="20" y="1136">Google</text>
                        </svg>

                        <div class="map-chips">
                            <button class="chip dark">Past due not shipped</button>
                            <button class="chip dark">At risk</button>
                            <button class="chip dark">Tracking on time</button>
                            <button class="chip dark">Delivered</button>
                            <button class="chip dark">Past due not delivered</button>
                        </div>

                        <button class="map-style">
                            <svg viewBox="0 0 98 94" preserveAspectRatio="none" aria-hidden="true">
                                <rect width="98" height="94" fill="#e9e9e9"/>
                                <path d="M0 42l8-4 4-12 10-4 20 4 8-2 8 4 10 6 8 10 8 12 6 12 8 12V94H0z" fill="#cfd2d2"/>
                                <path d="M62 0v30h12M74 30l8 14 6-10 10 20" fill="none" stroke="#aaa" stroke-width="1.500"/>
                                <path d="M70 35h28" stroke="#bbb" stroke-width="2" stroke-dasharray="4 3"/>
                            </svg>
                            <span>Light</span>
                        </button>

                        <div class="map-controls">
                            <div class="zoom">
                                <button aria-label="Zoom in"><svg viewBox="0 0 36 36"><path d="M16 1h4v15h15v4H20v15h-4V20H1v-4h15z"/></svg></button>
                                <button aria-label="Zoom out"><svg viewBox="0 0 36 36"><path d="M1 16h34v4H1z"/></svg></button>
                            </div>
                            <button class="fullscreen" aria-label="Full screen"><svg viewBox="0 0 36 36"><path fill-rule="evenodd" d="M1 4h34v28H1zM5 7v9h4v-5h5V7zM27 20v5h-5v4h9v-9z"/></svg></button>
                        </div>
                    </div>
                </section>

                <div class="side-col">
                    <section class="card comments">
                        <h2>Comments</h2>
                        <div class="tabs">
                            <button class="tab active">Response needed <span class="count">3</span></button>
                            <button class="tab">Response provided</button>
                        </div>
                        <ul class="comment-list">
                            <li class="comment">
                                <span class="avatar"><svg><use href="#i-person"/></svg></span>
                                <div class="comment-body">
                                    <div class="comment-name">Samuel Ruiz</div>
                                    <div class="comment-text">Customer is asking for ETA</div>
                                    <div class="comment-date">02/21/2024 11:20</div>
                                </div>
                            </li>
                            <li class="comment">
                                <span class="avatar"><svg><use href="#i-person"/></svg></span>
                                <div class="comment-body">
                                    <div class="comment-name">Carly Hartzman</div>
                                    <div class="comment-text">Any updates on this shipment?</div>
                                    <div class="comment-date">02/20/2024 14:05</div>
                                </div>
                            </li>
                            <li class="comment">
                                <span class="avatar"><svg><use href="#i-person"/></svg></span>
                                <div class="comment-body">
                                    <div class="comment-name">MJ Lenderman</div>
                                    <div class="comment-text">When is this scheduled to arrive?</div>
                                    <div class="comment-date">02/20/2024 2:53</div>
                                </div>
                            </li>
                        </ul>
                        <button class="view-all">View all</button>
                    </section>

                    <section class="card resources">
                        <h2>External resources</h2>
                        <a class="resource" href="#"><svg><use href="#i-dashboard"/></svg><span>Dashboards</span></a>
                        <a class="resource" href="#"><svg viewBox="0 0 32 32"><path d="M0 2h4v4h16V2h4v9l-4 3v-4H4v3h14l-3 4H4v3h9l-3 4H4v4h6l-1 4H0zM7 0h10v5H7zM11 32l1-6 11-13 4 4-11 13zM25 11l3-3 4 4-3 3z"/></svg><span>Reports</span></a>
                    </section>
                </div>
            </div>
        </main>
    </div>
</body>
</html>
```
FILE: styles.css
```
* {
    box-sizing: border-box;
}
body {
    margin: 0;
    font-family: "Open Sans", "Noto Sans", sans-serif;
    font-size: 28px;
    line-height: 40px;
    color: #000;
    background-color: #fff;
}
button, select {
    font: inherit;
    color: inherit;
    border: 0;
    margin: 0;
    padding: 0;
    background: none;
    cursor: pointer;
}
a {
    color: inherit;
    text-decoration: none;
}
svg {
    display: block;
    flex: none;
    fill: currentColor;
}
h1, h2 {
    margin: 0;
    font-family: Inter, sans-serif;
    font-weight: 600;
}
h1 {
    font-size: 68px;
    line-height: 88px;
}
h2 {
    font-size: 38px;
    line-height: 56px;
}
.sprite {
    position: absolute;
    width: 0;
    height: 0;
}
.app {
    display: flex;
    min-height: 100vh;
}

/* Sidebar */
.sidebar {
    flex: none;
    width: 128px;
    padding: 40px 0 0 4px;
    border-right: 4px solid #e8e8e6;
    display: flex;
    flex-direction: column;
    align-items: center;
    gap: 80px;
}
.side-btn svg {
    width: 40px;
    height: 40px;
}
.side-menu {
    margin-bottom: 40px;
}

/* Header */
.main {
    flex: 1;
    min-width: 0;
    padding: 20px 72px 72px;
}
.topbar {
    display: flex;
    justify-content: space-between;
    align-items: center;
    height: 72px;
}
.logo {
    font-family: Inter, sans-serif;
    font-size: 36px;
    font-weight: 500;
}
.logo-tms {
    font-weight: 300;
}
.top-icons {
    display: flex;
    align-items: center;
}
.icon-btn {
    position: relative;
    margin-right: 72px;
}
.icon-btn:nth-child(2) {
    margin-right: 60px;
}
.icon-btn:nth-child(3) {
    margin-right: 34px;
}
.icon-btn svg {
    width: 44px;
    height: 44px;
}
.bell-dot {
    position: absolute;
    top: -6px;
    right: 0;
    width: 20px;
    height: 20px;
    border: 2px solid #fff;
    border-radius: 50%;
    background-color: #276ef1;
}
.user {
    width: 72px;
    height: 72px;
    border-radius: 50%;
    background-color: #276ef1;
    color: #fff;
    font-size: 30px;
}
.title-row {
    display: flex;
    justify-content: space-between;
    align-items: center;
    margin-top: 50px;
}
.actions {
    display: flex;
    align-items: center;
    gap: 8px;
    font-size: 24px;
    font-weight: 600;
}
.updated {
    color: #757575;
    font-weight: 400;
}
.action {
    display: flex;
    align-items: center;
    gap: 16px;
    padding: 0 20px;
}
.action svg {
    width: 24px;
    height: 24px;
}
.toggle {
    display: flex;
    padding: 8px;
    border-radius: 20px;
    background-color: #e8e8e6;
}
.toggle-btn {
    height: 72px;
    padding: 0 18px;
    border: 4px solid transparent;
    border-radius: 16px;
}
.toggle-btn.active {
    border-color: #000;
    background-color: #fff;
}

/* Filters */
.filters {
    display: flex;
    align-items: center;
    gap: 16px;
    margin-top: 48px;
    font-size: 24px;
    font-weight: 600;
}
.chip {
    display: flex;
    align-items: center;
    gap: 16px;
    height: 56px;
    padding: 0 16px;
    border-radius: 28px;
    background-color: #e8e8e6;
    white-space: nowrap;
}
.chip.dark {
    gap: 12px;
    padding: 0 14px;
    background-color: #000;
    color: #fff;
}
.chip svg {
    width: 24px;
    height: 24px;
}
.chip-select {
    position: relative;
}
.chip-select select {
    appearance: none;
    height: 56px;
    padding: 0 52px 0 16px;
    border-radius: 28px;
    background-color: #e8e8e6;
}
.chip-select svg {
    position: absolute;
    top: 16px;
    right: 16px;
    width: 24px;
    height: 24px;
    pointer-events: none;
}
.reset {
    margin-left: 14px;
    text-decoration: underline;
    text-underline-offset: 4px;
}

/* Stats */
.stats {
    display: grid;
    grid-template-columns: repeat(5, 1fr);
    gap: 48px;
    margin-top: 48px;
}
.stat {
    padding: 44px 32px;
    border-radius: 24px;
    background-color: #f3f3f3;
}
.stat-number {
    margin-bottom: 8px;
    font-size: 48px;
    font-weight: 600;
    line-height: 64px;
}
.badge {
    display: flex;
    align-items: center;
    gap: 8px;
    width: fit-content;
    height: 40px;
    padding: 0 8px;
    border-radius: 8px;
    font-size: 24px;
    font-weight: 500;
    color: #fff;
}
.badge svg {
    width: 24px;
    height: 24px;
}
.green.badge {
    background-color: #0e8345;
}
.yellow.badge {
    background-color: #f2b62b;
    color: #161616;
}
.red.badge {
    background-color: #de1135;
}

/* Cards */
.panels {
    display: grid;
    grid-template-columns: repeat(12, 1fr);
    gap: 48px;
    margin-top: 48px;
}
.overview {
    grid-column: span 8;
}
.side-col {
    grid-column: span 4;
    display: flex;
    flex-direction: column;
    gap: 48px;
}
.card {
    padding: 44px;
    border: 4px solid #e8e8e6;
    border-radius: 24px;
}
.overview {
    padding-left: 0;
    padding-right: 0;
}
.overview h2 {
    padding: 0 44px;
}
.tabs {
    display: flex;
    font-weight: 600;
    box-shadow: inset 0 -10px #e8e8e6;
}
.overview .tabs {
    padding: 0 44px;
}
.tab {
    display: flex;
    align-items: center;
    justify-content: center;
    gap: 10px;
    height: 114px;
    padding: 0 31px;
    border-bottom: 10px solid transparent;
}
.tab.active {
    border-color: #000;
}
.comments .tab {
    flex: 1;
}
.count {
    width: 32px;
    height: 32px;
    border-radius: 50%;
    background-color: #276ef1;
    color: #fff;
    font-size: 24px;
    line-height: 32px;
}

/* Map */
.map {
    position: relative;
    margin: 40px 44px 0;
}
.map-svg {
    width: 100%;
    height: auto;
    font-family: Roboto, "Noto Sans", sans-serif;
}
.water {
    fill: #85d0e3;
}
.land {
    fill: #fbf8f3;
}
.sand {
    fill: #f5f0e5;
}
.map-svg .green {
    fill: #c5ecda;
}
.islands {
    fill: #b2e4ce;
}
.forest {
    fill: #a0dec1;
}
.rivers {
    fill: none;
    stroke: #85d0e3;
}
.borders path {
    fill: none;
    stroke: #6b7576;
    stroke-width: 2px;
    vector-effect: non-scaling-stroke;
}
.borders .dashed {
    stroke-dasharray: 8 5;
}
.borders .states {
    stroke: #9db5ac;
    stroke-dasharray: 4 3;
}
.map-svg text {
    text-anchor: middle;
}
.map-svg .start {
    text-anchor: start;
}
.map-svg .end {
    text-anchor: end;
}
.country, .city, .state {
    paint-order: stroke;
    stroke: #ffffffcc;
    stroke-width: 3px;
    stroke-linejoin: round;
}
.country {
    font-size: 19px;
    font-weight: 700;
    fill: #1c2224;
}
.country .big {
    font-size: 24px;
}
.city {
    font-size: 18px;
    font-weight: 400;
    fill: #3c4446;
}
.city .small {
    font-size: 15px;
}
.state {
    font-size: 14px;
    fill: #5c6c69;
}
.sea {
    font-size: 16px;
    fill: #4d91a3;
}
.ocean {
    font-size: 17px;
    letter-spacing: 2px;
}
.capital circle {
    fill: #222;
}
.town circle {
    fill: #fff;
    stroke: #444;
    stroke-width: 2px;
}
.ring circle {
    fill: none;
    stroke: #222;
    stroke-width: 1px;
}
.route {
    fill: none;
    stroke: #276ef1;
    stroke-width: 4px;
}
.halo {
    fill: #276ef1;
    fill-opacity: .2;
}
.pin {
    fill: #276ef1;
}
.pin-icon {
    fill: #fff;
}
.map-svg .google {
    font-family: "Open Sans", sans-serif;
    font-size: 34px;
    font-weight: 600;
    text-anchor: start;
    fill: #fff;
    stroke: #4d8fa2;
    stroke-width: 5px;
    paint-order: stroke;
}
.map-chips {
    position: absolute;
    top: 32px;
    left: 32px;
    display: flex;
    gap: 22px;
    font-size: 24px;
    font-weight: 600;
}
.map-chips .chip {
    box-shadow: 0 8px 32px #00000026;
}
.map-style {
    position: absolute;
    left: 18px;
    bottom: 64px;
    width: 114px;
    height: 110px;
    padding: 8px;
    border-radius: 16px;
    background-color: #fff;
    box-shadow: 0 4px 8px #00000040;
    font-family: Roboto, sans-serif;
    font-size: 24px;
    font-weight: 600;
}
.map-style svg {
    width: 98px;
    height: 94px;
    border-radius: 10px;
    overflow: hidden;
}
.map-style span {
    position: absolute;
    left: 0;
    right: 0;
    bottom: 12px;
}
.map-controls {
    position: absolute;
    right: 32px;
    bottom: 32px;
    display: flex;
    flex-direction: column;
    gap: 16px;
}
.zoom {
    border-radius: 16px;
    background-color: #fff;
    box-shadow: 0 8px 64px #00000040;
}
.zoom button, .fullscreen {
    display: flex;
    align-items: center;
    justify-content: center;
    width: 80px;
    height: 80px;
}
.zoom button + button {
    height: 84px;
    border-top: 4px solid #e8e8e6;
}
.fullscreen {
    border-radius: 50%;
    background-color: #fff;
    box-shadow: 0 8px 64px #00000033;
}
.map-controls svg {
    width: 36px;
    height: 36px;
}

/* Comments */
.comment-list {
    list-style: none;
    margin: 8px 0 12px;
    padding: 0;
}
.comment {
    display: flex;
    gap: 32px;
}
.avatar {
    flex: none;
    width: 72px;
    height: 72px;
    margin-top: 52px;
    border-radius: 50%;
    background-color: #000;
    color: #fff;
}
.avatar svg {
    width: 72px;
    height: 72px;
}
.comment-body {
    flex: 1;
    padding: 44px 0 46px;
    border-bottom: 2px solid #e8e8e6;
}
.comment:last-child .comment-body {
    border-color: transparent;
}
.comment-name {
    font-weight: 600;
}
.comment-text {
    margin: 4px 0 8px;
}
.comment-date {
    color: #6b6b6b;
}
.view-all {
    display: block;
    width: 100%;
    height: 72px;
    margin-bottom: 12px;
    border-radius: 16px;
    background-color: #e8e8e6;
    font-weight: 600;
}

/* External resources */
.resource {
    display: flex;
    align-items: center;
    gap: 32px;
}
.resources h2 {
    margin-bottom: 24px;
}
.resource svg {
    width: 32px;
    height: 32px;
}
.resource span {
    flex: 1;
    padding: 28px 0 26px;
    border-bottom: 2px solid #e8e8e6;
    font-weight: 500;
}
.resource:last-child span {
    border-color: transparent;
}
```
